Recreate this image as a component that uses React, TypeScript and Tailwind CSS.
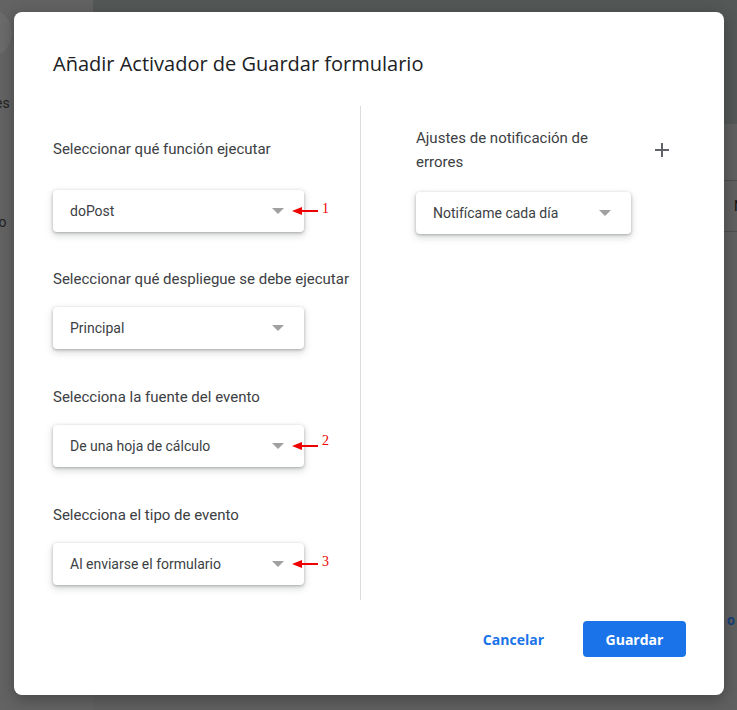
import React from "react";

const Caret = () => (
  <svg width="12" height="6" viewBox="0 0 12 6" className="shrink-0">
    <path d="M0 0 L12 0 L6 6 Z" fill="#a0a0a0" />
  </svg>
);

const Note = ({ n, dy = 0 }: { n: string; dy?: number }) => (
  <div className="absolute left-[239px] top-1/2 flex items-center" style={{ transform: `translateY(-50%)` }}>
    <svg width="26" height="10" viewBox="0 0 26 10">
      <path d="M0 5 L10 1 L10 9 Z" fill="#ee0000" />
      <rect x="9" y="4" width="17" height="2" fill="#ee0000" />
    </svg>
    <span
      className="ml-[4px] text-[14px] leading-none text-[#ee0000]"
      style={{ fontFamily: '"Liberation Serif", serif', transform: `translateY(${dy}px)` }}
    >
      {n}
    </span>
  </div>
);

const Select = ({ text, w, note, dy }: { text: string; w: string; note?: string; dy?: number }) => (
  <div className={`relative ${w}`}>
    <div className="flex h-[42px] items-center justify-between rounded-[4px] bg-white pl-[17px] pr-[20px] shadow-[0_1px_3px_rgba(60,64,67,0.35),0_3px_7px_1px_rgba(60,64,67,0.18)]">
      <span className="text-[14px] text-[#3c4043]" style={{ fontFamily: "Roboto, sans-serif" }}>
        {text}
      </span>
      <Caret />
    </div>
    {note && <Note n={note} dy={dy} />}
  </div>
);

const Label = ({ children, className = "" }: { children: React.ReactNode; className?: string }) => (
  <div className={`text-[15px] leading-[20px] text-[#3c4043] ${className}`} style={{ fontFamily: "Roboto, sans-serif" }}>
    {children}
  </div>
);

export default function App() {
  return (
    <div className="relative h-[710px] w-[737px] overflow-hidden bg-[#606060]">
      {/* background page */}
      <div className="absolute left-0 top-0 h-full w-[93px] bg-[#636363]" />
      <div className="absolute left-[93px] top-0 h-[124px] w-[644px] bg-[#545856]" />
      <div className="absolute left-[-38px] top-[8px] h-[50px] w-[50px] rounded-full bg-[#6b6b6b]" />
      <div className="absolute left-[-5px] top-[93px] text-[14px] text-[#222]" style={{ fontFamily: "Roboto, sans-serif" }}>es</div>
      <div className="absolute left-[-5px] top-[212px] text-[14px] text-[#222]" style={{ fontFamily: "Roboto, sans-serif" }}>lo</div>
      <div className="absolute left-[700px] top-[180px] h-px w-[37px] bg-[#4e4e4e]" />
      <div className="absolute left-[700px] top-[231px] h-px w-[37px] bg-[#4e4e4e]" />
      <div className="absolute left-[734px] top-[196px] text-[14px] text-[#111]" style={{ fontFamily: "Roboto, sans-serif" }}>N</div>
      <div className="absolute left-[727px] top-[610px] text-[14px] font-bold text-[#183f78]" style={{ fontFamily: "Roboto, sans-serif" }}>o</div>

      {/* dialog */}
      <div className="absolute left-[14px] top-[12px] flex h-[683px] w-[710px] flex-col rounded-[8px] bg-white pl-[39px] pr-[38px] pt-[38px] shadow-[0_4px_16px_rgba(0,0,0,0.3)]">
        <h1 className="text-[20px] leading-[28px] text-[#202124]" style={{ fontFamily: '"Open Sans", Roboto, sans-serif' }}>
          Añadir Activador de Guardar formulario
        </h1>

        <div className="mt-[28px] flex">
          <div className="flex w-[307px] flex-col pb-[15px] pt-[33px]">
            <Label>Seleccionar qué función ejecutar</Label>
            <div className="mt-[31px]">
              <Select text="doPost" w="w-[251px]" note="1" dy={-2} />
            </div>
            <Label className="mt-[37px] whitespace-nowrap">Seleccionar qué despliegue se debe ejecutar</Label>
            <div className="mt-[18px]">
              <Select text="Principal" w="w-[251px]" />
            </div>
            <Label className="mt-[38px]">Selecciona la fuente del evento</Label>
            <div className="mt-[18px]">
              <Select text="De una hoja de cálculo" w="w-[251px]" note="2" dy={-5} />
            </div>
            <Label className="mt-[38px]">Selecciona el tipo de evento</Label>
            <div className="mt-[18px]">
              <Select text="Al enviarse el formulario" w="w-[251px]" note="3" dy={-2} />
            </div>
          </div>

          <div className="w-px bg-[#dadce0]" />

          <div className="flex flex-col pl-[55px] pt-[20px]">
            <div className="flex items-start">
              <div className="w-[200px] text-[15px] leading-[24px] text-[#3c4043]" style={{ fontFamily: "Roboto, sans-serif" }}>
                Ajustes de notificación de errores
              </div>
              <svg width="14" height="14" viewBox="0 0 14 14" className="ml-[39px] mt-[17px]">
                <rect x="6" y="0" width="2" height="14" fill="#5f6368" />
                <rect x="0" y="6" width="14" height="2" fill="#5f6368" />
              </svg>
            </div>
            <div className="mt-[18px]">
              <Select text="Notifícame cada día" w="w-[215px]" />
            </div>
          </div>
        </div>

        <div className="mt-[21px] flex items-center justify-end gap-[23px]">
          <button className="h-[36px] px-[16px] text-[14px] font-bold text-[#1a73e8]" style={{ fontFamily: '"Open Sans", Roboto, sans-serif' }}>
            Cancelar
          </button>
          <button className="h-[36px] w-[103px] rounded-[4px] bg-[#1a73e8] text-[14px] font-bold text-white" style={{ fontFamily: '"Open Sans", Roboto, sans-serif' }}>
            Guardar
          </button>
        </div>
      </div>
    </div>
  );
}
